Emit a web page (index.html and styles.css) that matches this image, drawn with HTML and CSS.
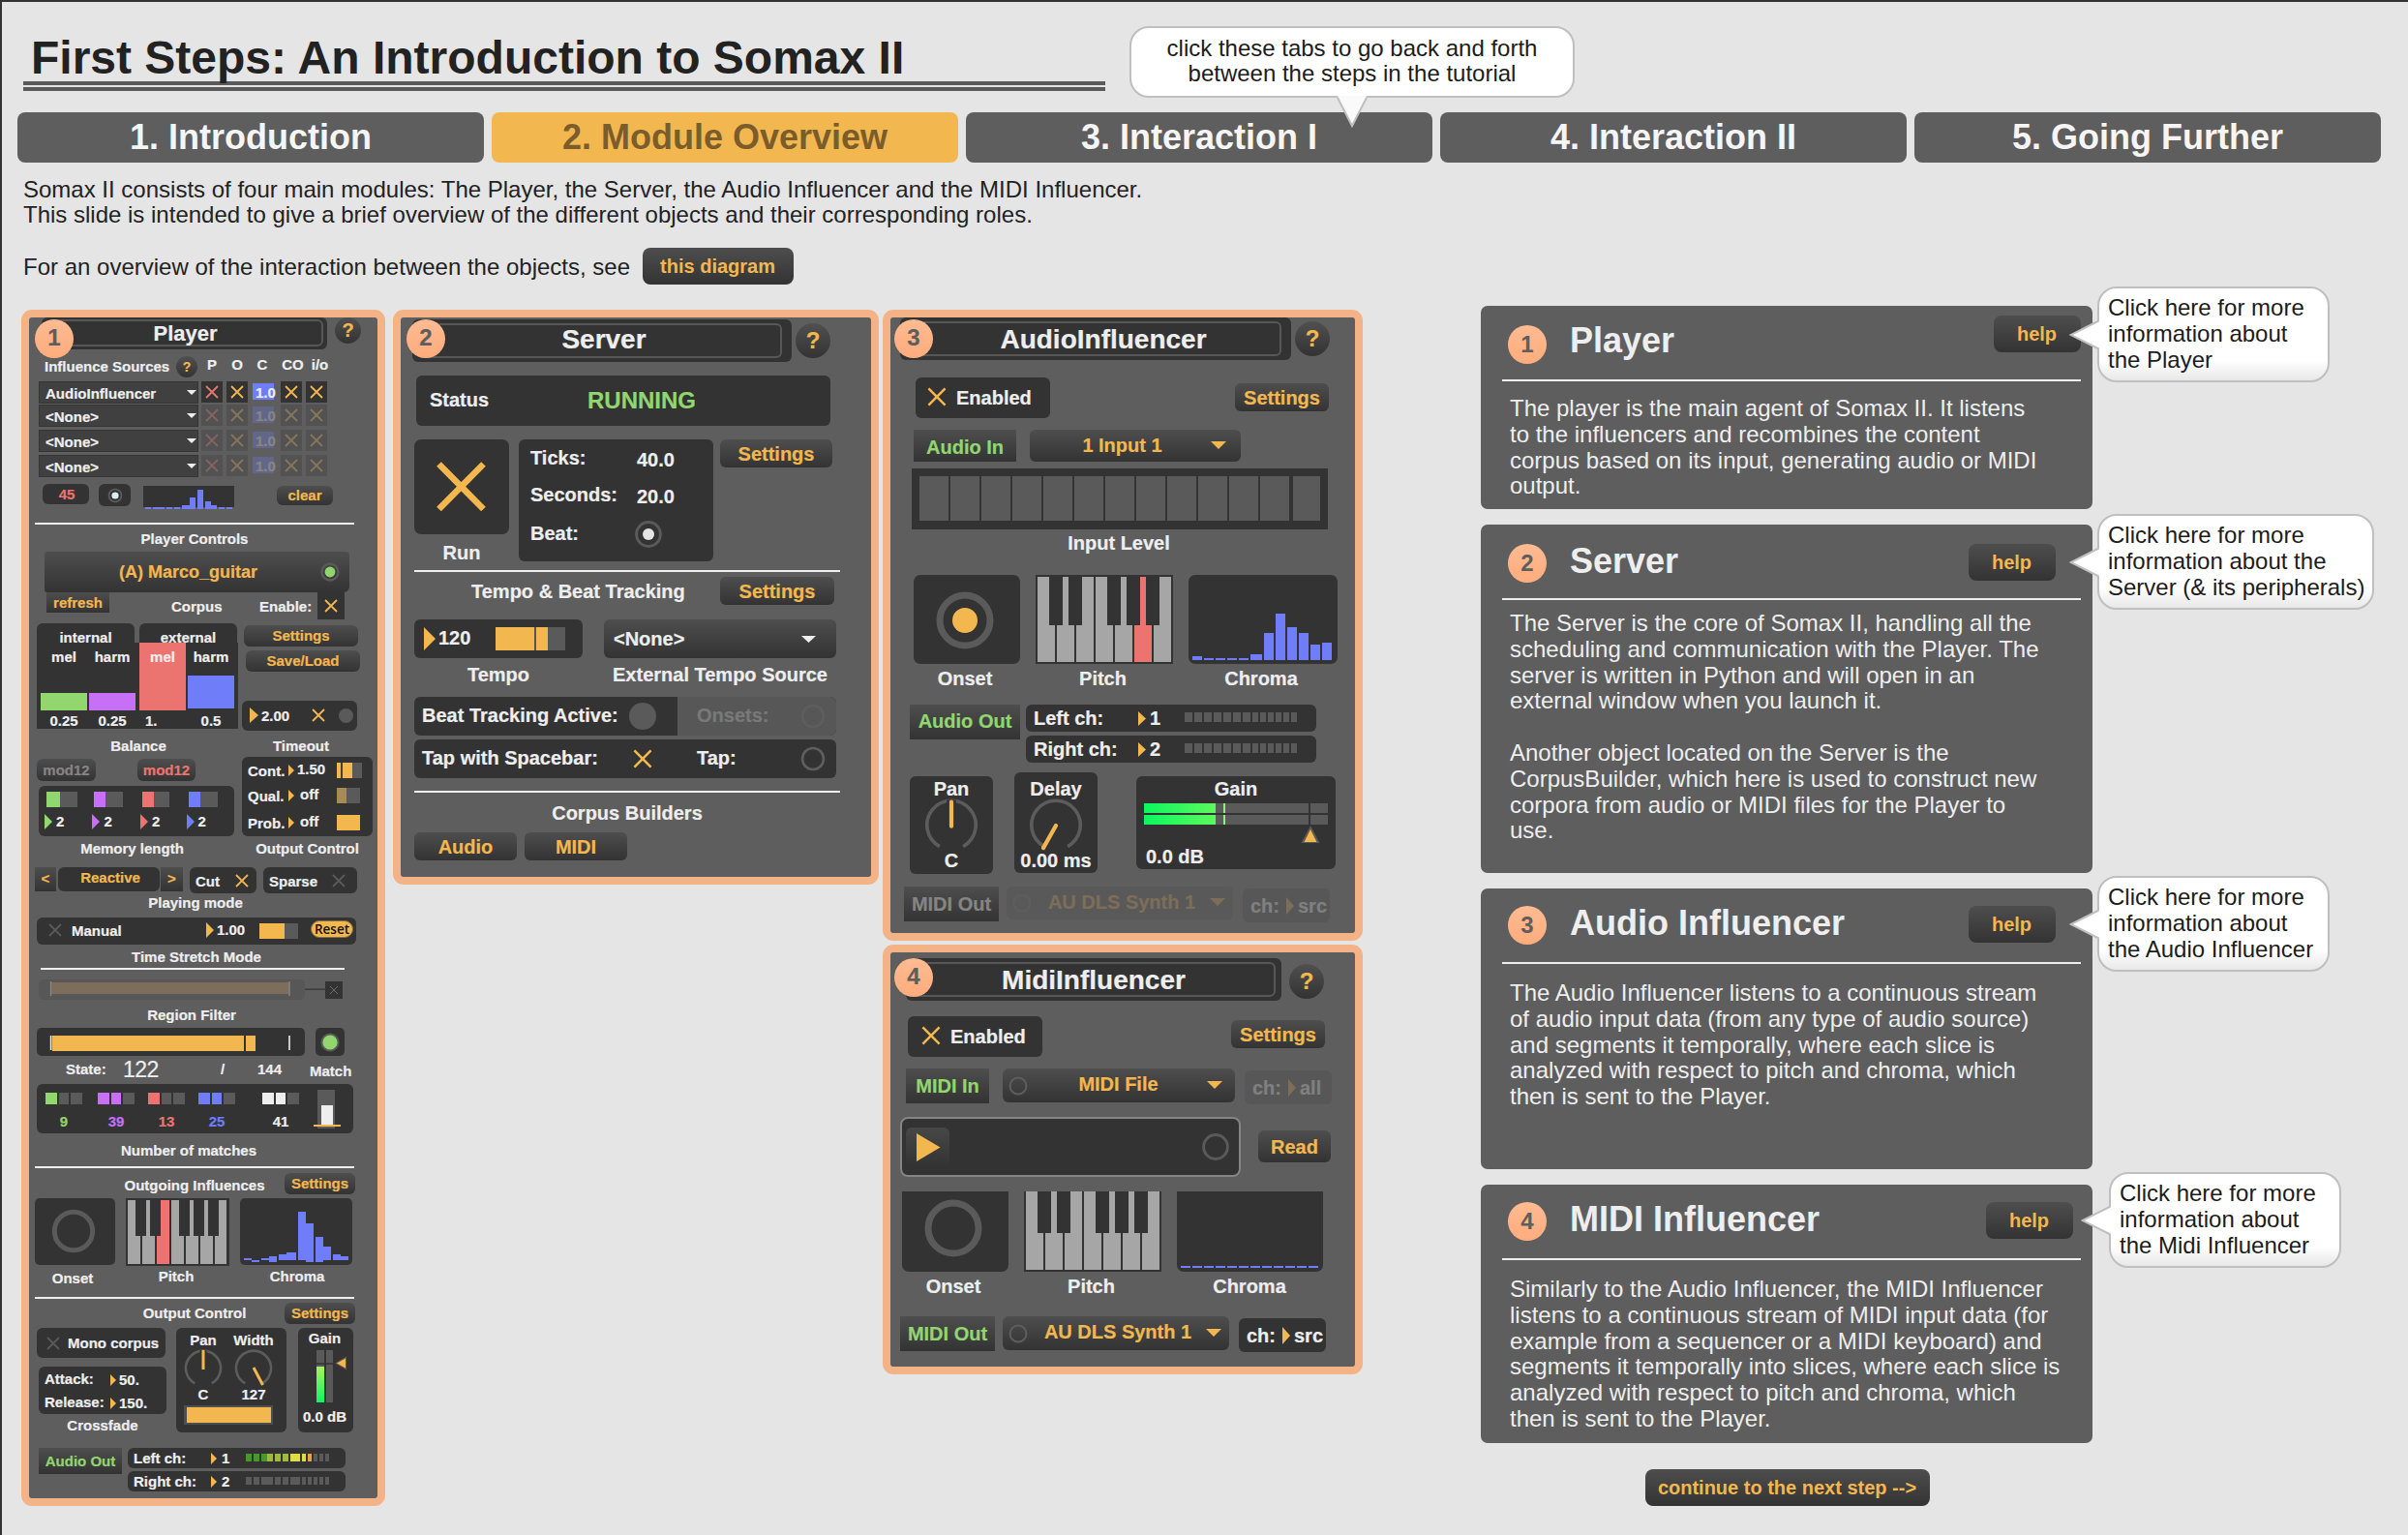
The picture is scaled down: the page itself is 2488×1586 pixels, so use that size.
FILE: index.html
```html
<!DOCTYPE html>
<html lang="en">
<head>
<meta charset="utf-8">
<title>First Steps: An Introduction to Somax II</title>
<link rel="stylesheet" href="styles.css">
</head>
<body>
<svg class="defs" width="0" height="0">
  <symbol id="x" viewBox="0 0 14 14"><path d="M1 1L13 13M13 1L1 13" stroke="currentColor" stroke-width="1.8" fill="none"/></symbol>
  <symbol id="tri" viewBox="0 0 6 12" preserveAspectRatio="none"><path d="M0 0L6 6L0 12Z" fill="currentColor"/></symbol>
  <symbol id="down" viewBox="0 0 16 8" preserveAspectRatio="none"><path d="M0 0H16L8 8Z" fill="currentColor"/></symbol>
  <symbol id="ring" viewBox="0 0 18 18"><circle cx="9" cy="9" r="7.6" fill="none" stroke="#5e5e5e" stroke-width="1.8"/></symbol>
  <symbol id="knob" viewBox="0 0 40 40"><path d="M11.3 35.4A18 18 0 1 1 28.7 35.4" fill="none" stroke="#5c5c5c" stroke-width="2.6"/></symbol>
  <symbol id="tail" viewBox="0 0 32 32"><path d="M32 1L1.5 16L32 31Z" fill="#fff"/><path d="M30.5 1.5L1.5 16L30.5 30.5" fill="none" stroke="#bfbfbf" stroke-width="2"/></symbol>
  <symbol id="leds" viewBox="0 0 116 10"><path fill="#5a5a5a" d="M0 0h8v10h-8zM10 0h8v10h-8zM20 0h8v10h-8zM30 0h8v10h-8zM40 0h8v10h-8zM50 0h8v10h-8zM60 0h8v10h-8zM70 0h6v10h-6zM78 0h6v10h-6zM86 0h6v10h-6zM94 0h6v10h-6zM102 0h6v10h-6zM110 0h6v10h-6z"/></symbol>
</svg>

<div class="page">
  <header class="head">
    <h1>First Steps: An Introduction to Somax II</h1>
    <div class="rule2"></div>
    <div class="callout callout-top">click these tabs to go back and forth<br>between the steps in the tutorial
      <svg class="tail-down" width="34" height="34" viewBox="0 0 34 34"><path d="M2 0L17 32L32 0Z" fill="#fafafa"/><path d="M2 2L17 31L32 2" fill="none" stroke="#bfbfbf" stroke-width="2"/></svg>
    </div>
  </header>

  <nav class="tabs">
    <a class="tab">1. Introduction</a>
    <a class="tab active">2. Module Overview</a>
    <a class="tab">3. Interaction I</a>
    <a class="tab">4. Interaction II</a>
    <a class="tab">5. Going Further</a>
  </nav>

  <section class="intro">
    <p>Somax II consists of four main modules: The Player, the Server, the Audio Influencer and the MIDI Influencer.<br>This slide is intended to give a brief overview of the different objects and their corresponding roles.</p>
    <div class="see"><span>For an overview of the interaction between the objects, see</span><button class="btn big diagram">this diagram</button></div>
  </section>

  <main class="work">
    <!-- Player -->
    <section class="panel player">
      <span class="badge b1">1</span>
      <div class="row p-head">
        <div class="titlebar"><div class="outline">Player</div></div>
        <span class="q">?</span>
      </div>
      <div class="row p-src">
        <span class="t src-label">Influence Sources</span><span class="q small">?</span>
        <span class="t c1">P</span><span class="t c2">O</span><span class="t c3">C</span><span class="t c4">CO</span><span class="t c5">i/o</span>
      </div>
      <div class="row src s1"><div class="dd">AudioInfluencer<svg><use href="#down"/></svg></div><i class="cell red"><svg><use href="#x"/></svg></i><i class="cell"><svg><use href="#x"/></svg></i><i class="num">1.0</i><i class="cell"><svg><use href="#x"/></svg></i><i class="cell"><svg><use href="#x"/></svg></i></div>
      <div class="row src off"><div class="dd">&lt;None&gt;<svg><use href="#down"/></svg></div><i class="cell red"><svg><use href="#x"/></svg></i><i class="cell"><svg><use href="#x"/></svg></i><i class="num">1.0</i><i class="cell"><svg><use href="#x"/></svg></i><i class="cell"><svg><use href="#x"/></svg></i></div>
      <div class="row src off"><div class="dd">&lt;None&gt;<svg><use href="#down"/></svg></div><i class="cell red"><svg><use href="#x"/></svg></i><i class="cell"><svg><use href="#x"/></svg></i><i class="num">1.0</i><i class="cell"><svg><use href="#x"/></svg></i><i class="cell"><svg><use href="#x"/></svg></i></div>
      <div class="row src off last"><div class="dd">&lt;None&gt;<svg><use href="#down"/></svg></div><i class="cell red"><svg><use href="#x"/></svg></i><i class="cell"><svg><use href="#x"/></svg></i><i class="num">1.0</i><i class="cell"><svg><use href="#x"/></svg></i><i class="cell"><svg><use href="#x"/></svg></i></div>
      <div class="row p-mon">
        <div class="box m45">45</div>
        <div class="box mled"><svg width="16" height="16"><circle cx="8" cy="8" r="6.5" fill="none" stroke="#5e5e5e" stroke-width="1.6"/><circle cx="8" cy="8" r="3.6" fill="#dbeef5"/></svg></div>
        <svg class="hist" width="94" height="24"><rect width="94" height="22" fill="#333"/><path fill="#6f7ef8" d="M2 22h6v2h-6zM10 22h12v2h-12zM24 22h6v2h-6zM32 22h6v2h-6zM40 20h8v4h-8zM48 12h6v12h-6zM56 4h6v20h-6zM64 16h6v8h-6zM70 20h6v4h-6zM78 22h6v2h-6zM86 22h6v2h-6z"/></svg>
        <button class="btn clear">clear</button>
      </div>
      <hr>
      <div class="t title pc">Player Controls</div>
      <button class="btn corpus">(A) Marco_guitar<svg width="20" height="20"><circle cx="10" cy="10" r="8.5" fill="none" stroke="#5a5a5a" stroke-width="2.4"/><circle cx="10" cy="10" r="5.4" fill="#91d66f"/></svg></button>
      <div class="row p-ref"><button class="btn sq refresh">refresh</button><span class="t corp">Corpus</span><span class="t enab">Enable:</span><i class="cell"><svg><use href="#x"/></svg></i></div>

      <div class="row p-mid">
        <div class="col bal">
          <div class="row heads"><span>internal</span><span>external</span></div>
          <div class="faders">
            <div class="fcol"><div class="fader f1">mel</div><b>0.25</b></div>
            <div class="fcol"><div class="fader f2">harm</div><b>0.25</b></div>
            <div class="fcol f-gap"><div class="fader f3">mel</div><b class="one">1.</b></div>
            <div class="fcol"><div class="fader f4">harm</div><b>0.5</b></div>
          </div>
          <div class="t ctr bal-l">Balance</div>
          <div class="row mods"><button class="btn mod gray">mod12</button><button class="btn mod redt">mod12</button></div>
          <div class="mem">
            <div class="mcell green"><svg width="32" height="16"><rect width="32" height="16" fill="#5a5a5a"/><rect width="14" height="16" fill="currentColor"/></svg><div class="row"><svg class="tri"><use href="#tri"/></svg><b>2</b></div></div>
            <div class="mcell purple"><svg width="30" height="16"><rect width="30" height="16" fill="#5a5a5a"/><rect width="12" height="16" fill="currentColor"/></svg><div class="row"><svg class="tri"><use href="#tri"/></svg><b>2</b></div></div>
            <div class="mcell redc"><svg width="28" height="16"><rect width="28" height="16" fill="#5a5a5a"/><rect width="12" height="16" fill="currentColor"/></svg><div class="row"><svg class="tri"><use href="#tri"/></svg><b>2</b></div></div>
            <div class="mcell blue"><svg width="30" height="16"><rect width="30" height="16" fill="#5a5a5a"/><rect width="12" height="16" fill="currentColor"/></svg><div class="row"><svg class="tri"><use href="#tri"/></svg><b>2</b></div></div>
          </div>
          <div class="t mem-l">Memory length</div>
        </div>
        <div class="col outc">
          <button class="btn set1">Settings</button>
          <button class="btn set2">Save/Load</button>
          <div class="box timeout"><svg class="tri"><use href="#tri"/></svg><b>2.00</b><svg class="xi"><use href="#x"/></svg><i class="dot"></i></div>
          <div class="t time-l">Timeout</div>
          <div class="box ocbox">
            <div class="row oc1"><span class="t">Cont.</span><svg class="tri"><use href="#tri"/></svg><b>1.50</b><svg width="26" height="16"><rect width="26" height="16" fill="#5a5a5a"/><rect width="16" height="16" fill="#f3b74f"/><rect x="4" width="2" height="16" fill="#4a4033"/></svg></div>
            <div class="row oc2"><span class="t">Qual.</span><svg class="tri"><use href="#tri"/></svg><b class="o">off</b><svg width="26" height="16"><rect width="24" height="16" fill="#5a5a5a"/><rect width="10" height="16" fill="#a88a55"/></svg></div>
            <div class="row oc3"><span class="t">Prob.</span><svg class="tri"><use href="#tri"/></svg><b class="o">off</b><svg width="26" height="16"><rect width="24" height="16" fill="#f3b74f"/></svg></div>
          </div>
          <div class="t ctr oc-l">Output Control</div>
        </div>
      </div>

      <div class="row p-mode"><button class="btn sq lt">&lt;</button><div class="box reactive">Reactive</div><button class="btn sq gt">&gt;</button><div class="box cut">Cut<svg class="xi amber"><use href="#x"/></svg></div><div class="box sparse">Sparse<svg class="xi"><use href="#x"/></svg></div></div>
      <div class="t title pm">Playing mode</div>
      <div class="box manual"><svg class="xi"><use href="#x"/></svg><span class="t">Manual</span><svg class="tri"><use href="#tri"/></svg><b>1.00</b><svg class="bar" width="40" height="16"><rect width="40" height="16" fill="#5a5a5a"/><rect width="26" height="16" fill="#f3b74f"/></svg><span class="reset">Reset</span></div>
      <div class="t title ts">Time Stretch Mode</div>
      <hr class="short">
      <svg class="region" width="316" height="22"><rect width="275" height="21" rx="5" fill="#575757"/><rect x="13" y="3" width="246" height="12" fill="#7c6e5a"/><path d="M12.5 2v15M259 2v15" stroke="#858585" stroke-width="1.4"/><path d="M275 10.2h22" stroke="#333" stroke-width="1.2"/><rect x="296" y="2" width="18" height="18" fill="#333"/><path d="M301 7l8 8M309 7l-8 8" stroke="#6a6a6a" stroke-width="1"/></svg>
      <div class="t title rf">Region Filter</div>
      <div class="row p-state">
        <svg width="277" height="29"><rect width="277" height="29" rx="5" fill="#333"/><rect x="16" y="8" width="210" height="16" fill="#f3b74f"/><rect x="214" y="8" width="2" height="16" fill="#333"/><path d="M14.6 8v15M261 8v15" stroke="#eee" stroke-width="1.6"/></svg>
        <svg class="match-led" width="30" height="29"><rect width="30" height="29" rx="5" fill="#333"/><circle cx="15" cy="15" r="8.6" fill="#91d66f" stroke="#5a5a5a" stroke-width="2"/></svg>
      </div>
      <div class="row p-num"><span class="t st">State:</span><span class="n122">122</span><span class="t sl">/</span><span class="t n144">144</span><span class="t mt">Match</span></div>
      <div class="box matches">
        <div class="grp green"><svg width="38" height="12"><path fill="currentColor" d="M0 0h12v12h-12z"/><path fill="#5a5a5a" d="M14 0h10v12h-10zM26 0h12v12h-12z"/></svg>9</div>
        <div class="grp purple"><svg width="38" height="12"><path fill="currentColor" d="M0 0h12v12h-12zM14 0h10v12h-10z"/><path fill="#5a5a5a" d="M26 0h12v12h-12z"/></svg>39</div>
        <div class="grp redc"><svg width="38" height="12"><path fill="currentColor" d="M0 0h12v12h-12z"/><path fill="#5a5a5a" d="M14 0h10v12h-10zM26 0h12v12h-12z"/></svg>13</div>
        <div class="grp blue"><svg width="38" height="12"><path fill="currentColor" d="M0 0h12v12h-12zM14 0h10v12h-10z"/><path fill="#5a5a5a" d="M26 0h12v12h-12z"/></svg>25</div>
        <div class="grp whitec"><svg width="38" height="12"><path fill="currentColor" d="M0 0h12v12h-12zM14 0h10v12h-10z"/><path fill="#5a5a5a" d="M26 0h12v12h-12z"/></svg>41</div>
        <svg class="vs" width="28" height="40"><rect x="4" width="18" height="40" fill="#5a5a5a"/><rect x="8" y="16" width="12" height="20" fill="#eee"/><rect y="36" width="28" height="2" fill="#f3b74f"/></svg>
      </div>
      <div class="t title nm">Number of matches</div>
      <hr class="hr2">
      <div class="row p-oi"><span class="t ctr">Outgoing Influences</span><button class="btn">Settings</button></div>
      <div class="row p-viz">
        <svg width="83" height="69"><rect width="83" height="69" rx="5" fill="#333"/><circle cx="40" cy="34" r="19.7" fill="none" stroke="#5a5a5a" stroke-width="5"/></svg>
        <svg width="107" height="70"><rect width="107" height="70" fill="#333"/><path fill="#a6a6a6" d="M2 2h13v66h-13zM17 2h13v66h-13zM47 2h13v66h-13zM62 2h13v66h-13zM77 2h13v66h-13zM92 2h12v66h-12z"/><rect x="32" y="2" width="13" height="66" fill="#ec7470"/><path fill="#333" d="M10 0h11v39h-11zM25 0h11v39h-11zM55 0h11v39h-11zM70 0h11v39h-11zM85 0h11v39h-11z"/></svg>
        <svg width="116" height="69"><rect width="116" height="69" rx="5" fill="#333"/><path fill="#6f7ef8" d="M4 62h8v2h-8zM12 64h8v2h-8zM22 62h8v2h-8zM30 60h8v6h-8zM40 58h8v6h-8zM48 56h10v8h-10zM60 14h8v50h-8zM68 26h8v40h-8zM78 40h8v26h-8zM86 50h8v14h-8zM96 58h8v6h-8zM104 60h8v4h-8z"/></svg>
      </div>
      <div class="row p-vl"><span class="t ctr on">Onset</span><span class="t ctr pi">Pitch</span><span class="t ctr ch">Chroma</span></div>
      <hr>
      <div class="row p-oc"><span class="t ctr">Output Control</span><button class="btn">Settings</button></div>
      <div class="row p-out">
        <div class="col oa">
          <div class="box mono"><svg class="xi"><use href="#x"/></svg>Mono corpus</div>
          <div class="box atk"><div class="row"><span class="t">Attack:</span><svg class="tri"><use href="#tri"/></svg><b>50.</b></div><div class="row"><span class="t">Release:</span><svg class="tri"><use href="#tri"/></svg><b>150.</b></div></div>
          <div class="t ctr xf">Crossfade</div>
        </div>
        <div class="box pw">
          <div class="row"><div class="kn"><span>Pan</span><svg width="40" height="40"><use href="#knob"/><path d="M20 1V21" stroke="#333" stroke-width="7"/><path d="M20 1V21" stroke="#f3b74f" stroke-width="3"/></svg><span>C</span></div><div class="kn"><span>Width</span><svg width="40" height="40"><use href="#knob"/><path d="M20 19L29.5 37" stroke="#f3b74f" stroke-width="3"/></svg><span>127</span></div></div>
          <svg class="wbar" width="92" height="20"><rect width="92" height="20" fill="#4e4e4e"/><rect x="3" y="2" width="87" height="16" fill="#f3b74f"/></svg>
        </div>
        <div class="box pgain"><span>Gain</span><svg width="40" height="54"><defs><linearGradient id="gv" x1="0" y1="0" x2="0" y2="1"><stop offset="0" stop-color="#a8f25c"/><stop offset="1" stop-color="#0cf760"/></linearGradient></defs><path d="M10 0h8v54h-8zM20 0h7v54h-7z" fill="#5a5a5a"/><rect x="10" y="17" width="8" height="37" fill="url(#gv)"/><path d="M10 14h17" stroke="#333" stroke-width="1.5"/><path d="M29 13.5L41 6.5V20.5Z" fill="#5a5a5a"/><path d="M31 13.5L40 8.5V18.5Z" fill="#f3b74f"/></svg><span>0.0 dB</span></div>
      </div>
      <div class="row p-ao">
        <button class="btn sq greent ao">Audio Out</button>
        <div class="col">
          <div class="box chn"><span class="t">Left ch:</span><svg class="tri"><use href="#tri"/></svg><b>1</b><svg width="86" height="8"><path fill="#44992a" d="M0 0h6v8h-6zM8 0h6v8h-6zM16 0h6v8h-6z"/><path fill="#a0bb3c" d="M22 0h6v8h-6zM30 0h6v8h-6zM38 0h6v8h-6z"/><path fill="#dddd44" d="M46 0h10v8h-10zM58 0h4v8h-4z"/><path fill="#f0a03c" d="M64 0h4v8h-4z"/><path fill="#5a5a5a" d="M70 0h4v8h-4zM76 0h4v8h-4zM82 0h4v8h-4z"/></svg></div>
          <div class="box chn"><span class="t">Right ch:</span><svg class="tri"><use href="#tri"/></svg><b>2</b><svg width="86" height="8"><path fill="#5a5a5a" d="M0 0h6v8h-6zM8 0h6v8h-6zM16 0h12v8h-12zM30 0h6v8h-6zM38 0h6v8h-6zM46 0h10v8h-10zM58 0h4v8h-4zM64 0h4v8h-4zM70 0h4v8h-4zM76 0h4v8h-4zM82 0h4v8h-4z"/></svg></div>
        </div>
      </div>
    </section>

    <!-- Server -->
    <section class="panel large server">
      <span class="badge">2</span>
      <div class="row s-head"><div class="titlebar"><div class="outline">Server</div></div><span class="q">?</span></div>
      <div class="box status"><span>Status</span><span class="running">RUNNING</span></div>
      <div class="row s-run">
        <div class="col"><svg width="98" height="98"><rect width="98" height="98" rx="7" fill="#333"/><path d="M25.5 25.5L71.5 72M71.5 25.5L25.5 72" stroke="#f3b74f" stroke-width="6.6"/></svg><span class="t ctr run">Run</span></div>
        <div class="box ticks"><div class="row"><span>Ticks:</span><b>40.0</b></div><div class="row"><span>Seconds:</span><b>20.0</b></div><div class="row"><span>Beat:</span><svg width="28" height="28"><circle cx="14" cy="14" r="12.4" fill="none" stroke="#5a5a5a" stroke-width="3"/><circle cx="14" cy="14" r="6" fill="#e5e5e5"/></svg></div></div>
        <button class="btn">Settings</button>
      </div>
      <hr>
      <div class="row s-tb"><span class="t ctr">Tempo &amp; Beat Tracking</span><button class="btn">Settings</button></div>
      <div class="row s-tempo">
        <div class="box tempo"><svg class="tri"><use href="#tri"/></svg><b>120</b><svg width="72" height="24"><rect width="72" height="24" fill="#5a5a5a"/><rect width="54" height="24" fill="#f3b74f"/><rect x="40" width="2" height="24" fill="#555"/></svg></div>
        <div class="btn none">&lt;None&gt;<svg><use href="#down"/></svg></div>
      </div>
      <div class="row s-tl"><span class="t ctr">Tempo</span><span class="t ctr">External Tempo Source</span></div>
      <div class="box beat"><div class="row bt-on"><span>Beat Tracking Active:</span><i class="dot"></i></div><div class="row bt-off"><span>Onsets:</span><svg width="26" height="26"><use href="#ring"/></svg></div></div>
      <div class="box tap"><div class="row bt-on"><span>Tap with Spacebar:</span><svg class="xi"><use href="#x"/></svg></div><div class="row bt-off"><span>Tap:</span><svg width="26" height="26"><use href="#ring"/></svg></div></div>
      <hr class="hr3">
      <div class="t ctr cb">Corpus Builders</div>
      <div class="row s-cb"><button class="btn">Audio</button><button class="btn">MIDI</button></div>
    </section>

    <div class="col infl">
      <!-- Audio influencer -->
      <section class="panel large audio">
        <span class="badge">3</span>
        <div class="row a-head"><div class="titlebar"><div class="outline">AudioInfluencer</div></div><span class="q">?</span></div>
        <div class="row a-en"><div class="box enabled"><svg class="xi"><use href="#x"/></svg>Enabled</div><button class="btn">Settings</button></div>
        <div class="row a-in"><button class="btn sq greent">Audio In</button><div class="btn sel"><span>1 Input 1</span><svg class="dn"><use href="#down"/></svg></div></div>
        <svg class="level" width="430" height="63"><rect width="430" height="63" fill="#333"/><path fill="#5a5a5a" d="M8 8h30v46h-30zM40 8h30v46h-30zM72 8h30v46h-30zM104 8h30v46h-30zM136 8h30v46h-30zM168 8h30v46h-30zM200 8h30v46h-30zM232 8h30v46h-30zM264 8h30v46h-30zM296 8h30v46h-30zM328 8h30v46h-30zM360 8h30v46h-30zM394 8h28v46h-28z"/></svg>
        <div class="t ctr il">Input Level</div>
        <div class="row viz a-viz">
          <svg width="110" height="92"><rect width="110" height="92" rx="7" fill="#333"/><circle cx="53" cy="47" r="26" fill="none" stroke="#5a5a5a" stroke-width="7"/><circle cx="53" cy="47" r="13" fill="#f3b74f"/></svg>
          <svg width="142" height="92"><rect width="142" height="92" fill="#333"/><path fill="#a6a6a6" d="M2 2h18v88h-18zM22 2h18v88h-18zM42 2h18v88h-18zM62 2h18v88h-18zM82 2h18v88h-18zM122 2h18v88h-18z"/><rect x="102" y="2" width="18" height="88" fill="#ec7470"/><path fill="#333" d="M14 0h14v52h-14zM34 0h14v52h-14zM74 0h14v52h-14zM94 0h14v52h-14zM114 0h14v52h-14z"/></svg>
          <svg width="154" height="92"><rect width="154" height="92" rx="7" fill="#333"/><path fill="#6f7ef8" d="M4 84h10v4h-10zM16 86h10v2h-10zM28 86h10v2h-10zM40 86h10v2h-10zM52 86h10v2h-10zM64 82h12v6h-12zM78 60h10v28h-10zM90 40h10v48h-10zM102 54h10v34h-10zM114 60h10v28h-10zM126 72h10v16h-10zM138 70h10v18h-10z"/></svg>
        </div>
        <div class="row vl a-vl"><span class="t ctr">Onset</span><span class="t ctr">Pitch</span><span class="t ctr">Chroma</span></div>
        <div class="row a-out">
          <button class="btn sq greent">Audio Out</button>
          <div class="col">
            <div class="box chn"><span>Left ch:</span><svg class="tri"><use href="#tri"/></svg><b>1</b><svg width="116" height="10"><use href="#leds"/></svg></div>
            <div class="box chn"><span>Right ch:</span><svg class="tri"><use href="#tri"/></svg><b>2</b><svg width="116" height="10"><use href="#leds"/></svg></div>
          </div>
        </div>
        <div class="row a-pan">
          <div class="box kbox k1"><span>Pan</span><svg width="56" height="56" viewBox="0 0 40 40"><use href="#knob"/><path d="M20 1V22" stroke="#333" stroke-width="7"/><path d="M20 2.5V20.5" stroke="#f3b74f" stroke-width="3" stroke-linecap="round"/></svg><span>C</span></div>
          <div class="box kbox k2"><span>Delay</span><svg width="56" height="56" viewBox="0 0 40 40"><use href="#knob"/><path d="M20 20L10.7 36.5" stroke="#f3b74f" stroke-width="3" stroke-linecap="round"/></svg><span>0.00 ms</span></div>
          <div class="box gain"><span class="ctr">Gain</span><svg width="190" height="42"><defs><linearGradient id="gh"><stop offset="0" stop-color="#0cf760"/><stop offset="1" stop-color="#5cf85c"/></linearGradient></defs><path fill="#5a5a5a" d="M0 0h190v10h-190zM0 12h190v10h-190z"/><path d="M0 0h74v10h-74zM0 12h74v10h-74z" fill="url(#gh)"/><path fill="#8ef07a" d="M82 0h2v10h-2zM82 12h2v10h-2z"/><path fill="#333" d="M170 0h2v22h-2z"/><path d="M172 23L181.5 41H162.5Z" fill="#5a5a5a"/><path d="M172 27L178.5 40H165.5Z" fill="#f3b74f"/></svg><span>0.0 dB</span></div>
        </div>
        <div class="row a-mo"><button class="btn sq gray">MIDI Out</button><div class="btn sel dim"><svg class="rg"><use href="#ring"/></svg><span>AU DLS Synth 1</span><svg class="dn"><use href="#down"/></svg></div><div class="box chs dim"><span>ch:</span><svg class="tri"><use href="#tri"/></svg><span>src</span></div></div>
      </section>

      <!-- MIDI influencer -->
      <section class="panel large midi">
        <span class="badge">4</span>
        <div class="row m-head"><div class="titlebar"><div class="outline">MidiInfluencer</div></div><span class="q">?</span></div>
        <div class="row m-en"><div class="box enabled"><svg class="xi"><use href="#x"/></svg>Enabled</div><button class="btn">Settings</button></div>
        <div class="row m-in"><button class="btn sq greent">MIDI In</button><div class="btn sel"><svg class="rg"><use href="#ring"/></svg><span>MIDI File</span><svg class="dn"><use href="#down"/></svg></div><div class="box chs dim"><span>ch:</span><svg class="tri"><use href="#tri"/></svg><span>all</span></div></div>
        <div class="row m-play"><div class="play"><div class="pbtn"><svg width="25" height="29"><path d="M0 0L24.5 14.5L0 29Z" fill="#f3b74f"/></svg></div><svg width="28" height="28"><circle cx="14" cy="14" r="12.4" fill="none" stroke="#5a5a5a" stroke-width="3"/></svg></div><button class="btn read">Read</button></div>
        <div class="row viz m-viz">
          <svg width="110" height="83"><path d="M0 0H110V76a7 7 0 0 1-7 7H7a7 7 0 0 1-7-7Z" fill="#333"/><circle cx="53" cy="38" r="26" fill="none" stroke="#5a5a5a" stroke-width="7"/></svg>
          <svg width="142" height="83"><rect width="142" height="83" fill="#333"/><path fill="#a6a6a6" d="M2 0h18v81h-18zM22 0h18v81h-18zM42 0h18v81h-18zM62 0h18v81h-18zM82 0h18v81h-18zM102 0h18v81h-18zM122 0h18v81h-18z"/><path fill="#333" d="M14 0h14v43h-14zM34 0h14v43h-14zM74 0h14v43h-14zM94 0h14v43h-14zM114 0h14v43h-14z"/></svg>
          <svg width="152" height="83"><path d="M0 0H151V76a7 7 0 0 1-7 7H7a7 7 0 0 1-7-7Z" fill="#333"/><path fill="#6f7ef8" d="M4 77h10v2h-10zM16 77h10v2h-10zM28 77h10v2h-10zM40 77h10v2h-10zM52 77h10v2h-10zM64 77h10v2h-10zM76 77h10v2h-10zM88 77h10v2h-10zM100 77h10v2h-10zM112 77h10v2h-10zM124 77h10v2h-10zM136 77h10v2h-10z"/></svg>
        </div>
        <div class="row vl m-vl"><span class="t ctr">Onset</span><span class="t ctr">Pitch</span><span class="t ctr">Chroma</span></div>
        <div class="row m-out"><button class="btn sq greent">MIDI Out</button><div class="btn sel"><svg class="rg"><use href="#ring"/></svg><span>AU DLS Synth 1</span><svg class="dn"><use href="#down"/></svg></div><div class="box chs"><span>ch:</span><svg class="tri"><use href="#tri"/></svg><span>src</span></div></div>
      </section>
    </div>

    <div class="cards">
      <article class="card k-player">
        <header><span class="num">1</span><h2>Player</h2><button class="btn big">help</button></header>
        <p>The player is the main agent of Somax II. It listens<br>to the influencers and recombines the content<br>corpus based on its input, generating audio or MIDI<br>output.</p>
        <div class="callout side">Click here for more<br>information about<br>the Player<svg class="tail"><use href="#tail"/></svg></div>
      </article>
      <article class="card k-server">
        <header><span class="num">2</span><h2>Server</h2><button class="btn big">help</button></header>
        <p>The Server is the core of Somax II, handling all the<br>scheduling and communication with the Player. The<br>server is written in Python and will open in an<br>external window when you launch it.<br><br>Another object located on the Server is the<br>CorpusBuilder, which here is used to construct new<br>corpora from audio or MIDI files for the Player to<br>use.</p>
        <div class="callout side wide">Click here for more<br>information about the<br>Server (&amp; its peripherals)<svg class="tail"><use href="#tail"/></svg></div>
      </article>
      <article class="card k-audio">
        <header><span class="num">3</span><h2>Audio Influencer</h2><button class="btn big">help</button></header>
        <p>The Audio Influencer listens to a continuous stream<br>of audio input data (from any type of audio source)<br>and segments it temporally, where each slice is<br>analyzed with respect to pitch and chroma, which<br>then is sent to the Player.</p>
        <div class="callout side">Click here for more<br>information about<br>the Audio Influencer<svg class="tail"><use href="#tail"/></svg></div>
      </article>
      <article class="card k-midi">
        <header><span class="num">4</span><h2>MIDI Influencer</h2><button class="btn big">help</button></header>
        <p>Similarly to the Audio Influencer, the MIDI Influencer<br>listens to a continuous stream of MIDI input data (for<br>example from a sequencer or a MIDI keyboard) and<br>segments it temporally into slices, where each slice is<br>analyzed with respect to pitch and chroma, which<br>then is sent to the Player.</p>
        <div class="callout side">Click here for more<br>information about<br>the Midi Influencer<svg class="tail"><use href="#tail"/></svg></div>
      </article>
      <button class="btn big next">continue to the next step --&gt;</button>
    </div>
  </main>
</div>
</body>
</html>
```

FILE: styles.css
```css
* { box-sizing: border-box; margin: 0; padding: 0; }
body { background: #e5e5e5; color: #222; font-family: "Liberation Sans", Arial, sans-serif; }
.defs { display: block; height: 0; }
svg { display: block; flex: none; }
i { font-style: normal; }
.page { width: 2488px; height: 1586px; overflow: hidden; box-shadow: inset 2px 2px #333; }
.row { display: flex; align-items: flex-start; }
.row > *, .box > * { flex: none; }
.col { display: flex; flex-direction: column; }
.ctr { text-align: center; }

/* header */
.head { position: relative; height: 116px; padding: 33px 0 0 24px; }
h1 { height: 51px; padding-left: 8px; font-size: 48px; line-height: 53px; white-space: nowrap; }
.rule2 { width: 1118px; height: 10px; border: solid #5a5a5a; border-width: 4px 0; }
.callout { position: absolute; border: 2px solid #bfbfbf; border-radius: 20px; background: linear-gradient(#fff 78%, #e8e8e8); color: #1c1c1c; font-size: 24px; line-height: 26.8px; white-space: nowrap; }
.callout-top { z-index: 2; left: 1167px; top: 27px; width: 460px; height: 74px; padding-top: 8px; background: #fff; line-height: 26px; text-align: center; }
.tail-down { position: absolute; left: 211px; top: 70px; }
.tabs { display: grid; grid-template-columns: repeat(5, 482px); gap: 8px; height: 52px; margin-left: 18px; }
.tab { border-radius: 8px; background: #5e5e5e; color: #f5f5f5; font-size: 36px; font-weight: bold; line-height: 52px; text-align: center; }
.tab.active { background: #f3b74f; color: #7b5d2c; }
.intro { height: 148px; padding: 15px 0 0 24px; font-size: 24px; line-height: 26px; }
.intro p { height: 73px; }
.see { display: flex; align-items: center; height: 38px; }
.see span { padding-top: 1px; }
.diagram { width: 156px; margin-left: 13px; }

/* shared controls */
.btn { display: flex; align-items: center; justify-content: center; border: 0; border-radius: 6px; background: linear-gradient(#4e4e4e, #333); color: #f3b74f; font-family: inherit; font-size: 15px; font-weight: bold; line-height: 18px; white-space: nowrap; flex: none; }
.btn.sq { border-radius: 0; }
.btn.big { height: 38px; padding-right: 1px; border-radius: 8px; font-size: 20px; line-height: 24px; }
.btn.greent { color: #91d66f; }
.btn.gray { color: #858585; }
.btn.redt { color: #ec7470; }
.green { color: #91d66f; }
.purple { color: #c76ff5; }
.redc { color: #ec7470; }
.blue { color: #6f7ef8; }
.whitec { color: #eee; }
.box { display: flex; border-radius: 6px; background: #333; }
.t { display: block; line-height: 18px; white-space: nowrap; }
.tri { color: #f3b74f; }
.xi { width: 14px; height: 14px; color: #5a5a5a; }
.dot { border-radius: 50%; background: #5a5a5a; }

.work { display: flex; align-items: flex-start; padding-left: 22px; }
.panel { position: relative; flex: none; margin-top: 4px; border: 8px solid #f3b386; border-radius: 11px; background: #5e5e5e; color: #eee; font-size: 15px; font-weight: bold; line-height: 18px; -webkit-text-stroke: .2px currentColor; }
.badge { position: absolute; z-index: 1; left: 6px; top: 2px; width: 40px; height: 40px; border-radius: 50%; background: linear-gradient(#ffbb92, #ffac7c); color: #5e5e5e; font-size: 24px; line-height: 38px; text-align: center; }
.titlebar { border-radius: 6px; background: #333; }
.outline { border: 2px solid #575757; border-radius: 6px; color: #eee; text-align: center; }
.q { border-radius: 50%; background: linear-gradient(#505050, #333); color: #f3b74f; text-align: center; }
.panel hr { width: 330px; height: 2px; margin-left: 6px; border: 0; background: #eee; }

/* player */
.player { width: 376px; height: 1236px; }
.p-head { height: 40px; }
.p-head .titlebar { width: 295px; height: 33px; margin-left: 13px; padding: 2px 4px; }
.p-head .outline { height: 28px; padding-left: 2px; font-size: 22px; line-height: 25px; }
.p-head .q { width: 27px; height: 27px; margin-left: 8px; font-size: 20px; line-height: 27px; }
.p-src { height: 26px; }
.src-label { width: 136px; margin: 2px 0 0 16px; }
.q.small { width: 22px; height: 22px; font-size: 14px; line-height: 22px; }
.p-src .t:not(.src-label) { text-align: center; }
.c1 { width: 22px; margin-left: 4px; }
.c2 { width: 22px; margin-left: 4px; }
.c3 { width: 22px; margin-left: 4px; }
.c4 { width: 27px; margin-left: 7px; }
.c5 { width: 27px; margin-left: 1px; }
.src { height: 26px; }
.src.s1 { height: 24px; }
.src.last { height: 30px; }
.src .dd { display: flex; align-items: center; justify-content: space-between; width: 165px; height: 22.5px; margin-left: 10px; padding: 3px 1px 0 6px; border: 1px solid #353535; background: #404040; }
.dd svg { width: 10px; height: 5px; margin-bottom: 2px; }
.cell { display: flex; align-items: center; justify-content: center; width: 22px; height: 22px; margin-left: 4px; background: #333; color: #f3b74f; }
.cell svg { width: 14px; height: 14px; }
.cell.red { margin-left: 3px; color: #ec7470; }
.src .num { width: 22px; height: 17px; margin: 2px 7px 0 5px; padding-left: 3px; background: #6f7ef8; line-height: 19px; }
.src .num + .cell { margin-left: 0; }
.off .cell, .off .num { opacity: .27; }
.p-mon { height: 40px; }
.m45 { width: 48px; height: 21px; margin-left: 14px; padding-left: 2px; align-items: center; justify-content: center; color: #ec7470; }
.mled { width: 33px; height: 23px; margin-left: 10px; align-items: center; justify-content: center; }
.hist { margin: 2px 0 0 13px; }
.clear { width: 58px; height: 20px; margin: 2px 0 0 44px; }
.title { width: 342px; text-align: center; }
.pc { margin: 6px 0 4px; }
.corpus { width: 315px; height: 42px; margin-left: 16px; padding-left: 77px; padding-right: 10px; justify-content: space-between; border-radius: 3px 4px 6px 3px; font-size: 18px; }
.p-ref { height: 32px; }
.refresh { width: 65px; height: 21px; margin-left: 18px; }
.corp { width: 91px; margin: 6px 0 0 64px; }
.enab { width: 60px; margin-top: 6px; }
.p-ref .cell { width: 28px; height: 28px; margin-left: 0; }
.p-mid { height: 252px; padding-left: 8px; }
.bal { width: 208px; }
.heads { gap: 5px; }
.heads span { width: 101px; height: 20px; padding-top: 6px; border-radius: 6px 6px 0 0; background: #333; line-height: 18px; text-align: center; }
.faders { display: flex; gap: 2px; height: 89px; padding-left: 4px; background: #333; }
.fcol { width: 48px; text-align: center; }
.fcol b { display: block; margin-top: 2px; }
.fcol .one { padding-left: 6px; text-align: left; }
.f-gap { margin-left: 2px; }
.fader { height: 70px; padding-top: 6px; background-repeat: no-repeat; }
.f1 { background-image: linear-gradient(#91d66f, #91d66f); background-size: 100% 18px; background-position: 0 52px; }
.f2 { background-image: linear-gradient(#c76ff5, #c76ff5); background-size: 100% 18px; background-position: 0 52px; }
.f3 { background-image: linear-gradient(#ec7470, #ec7470); }
.f4 { background-image: linear-gradient(#6f7ef8, #6f7ef8); background-size: 100% 34px; background-position: 0 34px; }
.bal-l { margin: 9px 0 4px; padding-left: 2px; }
.mods { height: 28px; }
.mod { width: 61px; height: 23px; }
.mod.redt { width: 60px; margin-left: 43px; }
.mem { display: flex; width: 202px; height: 52px; margin-left: 2px; padding: 6px 0 0 6px; border-radius: 6px; background: #333; }
.mcell { width: 52px; }
.mcell:nth-child(3) { width: 50px; }
.mcell > svg { margin-left: 2px; }
.mcell .row { margin-top: 6px; }
.mcell .tri { width: 8px; height: 16px; margin-top: 1px; color: inherit; }
.mcell b { margin-left: 4px; color: #eee; }
.mem-l { width: 197px; margin-top: 4px; text-align: center; }
.outc { width: 135px; margin-left: 4px; }
.set1, .set2 { width: 118px; height: 22px; }
.set1 { margin: 2px 0 4px 2px; }
.set2 { margin-left: 4px; }
.timeout { width: 119px; height: 31px; margin-top: 30px; padding-left: 8px; }
.timeout .tri { width: 9px; height: 16px; margin-top: 7px; }
.timeout b { width: 52px; margin: 7px 0 0 3px; }
.timeout .xi { margin-top: 8px; color: #f3b74f; }
.timeout .dot { width: 15px; height: 15px; margin: 8px 0 0 14px; }
.time-l { width: 122px; margin: 7px 0 2px; text-align: center; }
.ocbox { flex-direction: column; height: 82px; padding: 6px 0 0 6px; }
.oc1 { height: 26px; }
.oc2 { height: 28px; }
.ocbox .t { width: 42px; }
.ocbox .tri { width: 6px; height: 12px; margin-top: 2px; }
.ocbox b { width: 41px; margin: -2px 0 0 3px; }
.ocbox .o { padding-left: 3px; }
.oc-l { margin-top: 4px; }
.p-mode { height: 28px; }
.lt { width: 22px; height: 25px; margin-left: 6px; padding-bottom: 2px; }
.gt { width: 23px; height: 25px; margin-left: 1px; padding-bottom: 2px; }
.reactive { width: 105px; height: 25px; margin-left: 2px; padding: 0 0 3px 3px; align-items: center; justify-content: center; color: #f3b74f; }
.cut, .sparse { height: 27px; margin-left: 7px; padding: 2px 8px 0 6px; align-items: center; justify-content: space-between; }
.cut { width: 69px; }
.sparse { width: 97px; padding-right: 12px; }
.cut .xi, .sparse .xi { margin-bottom: 2px; }
.xi.amber { color: #f3b74f; }
.manual { width: 330px; height: 28px; margin: 6px 0 4px 8px; padding-left: 12px; }
.manual .xi { margin-top: 6px; }
.manual .t { width: 139px; margin: 5px 0 0 10px; }
.manual .tri { width: 8px; height: 16px; margin-top: 5px; }
.manual b { width: 44px; margin: 4px 0 0 3px; }
.manual .bar { margin-top: 6px; }
.reset { width: 44px; height: 18px; margin: 3px 0 0 13px; border: 1px solid #8a6d3a; border-radius: 9px; background: #f3b74f; color: #111; font: 600 13.5px/16px "Open Sans", sans-serif; text-align: center; -webkit-text-stroke: 0; }
.pm { padding-left: 2px; }
.ts { padding-left: 4px; }
.panel hr.short { width: 314px; margin: 2px 0 0 12px; }
.region { margin: 10px 0 0 10px; }
.rf { margin: 6px 0 4px; padding-right: 6px; }
.p-state { height: 29px; padding-left: 8px; }
.match-led { margin-left: 11px; }
.p-num { height: 29px; }
.st { width: 59px; margin: 5px 0 0 38px; }
.n122 { width: 89px; padding-top: 1px; font-size: 23px; font-weight: normal; line-height: 26px; letter-spacing: -.5px; }
.sl { width: 28px; margin-top: 5px; text-align: center; }
.n144 { width: 52px; margin: 5px 0 0 22px; }
.mt { margin: 7px 0 0 2px; }
.matches { width: 327px; height: 51px; margin-left: 8px; padding-left: 9px; }
.grp { width: 38px; padding-top: 9px; margin-right: 16px; text-align: center; }
.grp:nth-child(2), .grp:nth-child(3) { margin-right: 14px; }
.grp:nth-child(4) { margin-right: 28px; }
.grp:nth-child(5) { margin-right: 15px; }
.grp svg { margin-bottom: 9px; }
.vs { margin-top: 6px; }
.nm { margin: 9px 0 7px; padding-right: 12px; }
.p-oi { height: 22px; margin-top: 5px; }
.p-oi .t, .p-oc .t { width: 146px; margin: 4px 20px 0 98px; }
.p-oc .t { margin-top: 2px; }
.p-oi .btn, .p-oc .btn { width: 73px; height: 22px; }
.p-viz { height: 70px; margin-top: 4px; padding-left: 6px; gap: 11px; }
.p-vl { height: 32px; }
.on { width: 82px; margin: 4px 0 0 4px; }
.pi { width: 106px; margin: 2px 0 0 13px; }
.ch { width: 116px; margin: 2px 0 0 14px; }
.p-oc { height: 26px; margin-top: 4px; }
.p-out { height: 124px; padding-left: 8px; }
.oa { width: 144px; }
.mono { width: 133px; height: 31px; padding-left: 10px; align-items: center; }
.mono .xi { margin-right: 8px; color: #5a5a5a; }
.atk { flex-direction: column; width: 132px; height: 49px; margin: 9px 0 3px 2px; padding: 4px 0 0 6px; gap: 5px; }
.atk .t { width: 68px; }
.atk .tri { width: 6px; height: 12px; margin-top: 4px; }
.atk b { margin: 1px 0 0 3px; }
.xf { width: 136px; }
.pw { flex-direction: column; width: 114px; height: 108px; padding: 4px 0 0 2px; }
.kn { display: flex; flex-direction: column; align-items: center; width: 52px; }
.kn svg { margin: 0 0 -2px; }
.wbar { margin: 2px 0 0 6px; }
.pgain { flex-direction: column; align-items: center; width: 57px; height: 108px; margin-left: 12px; padding: 2px 2px 0 0; }
.pgain svg { margin: 3px 0 6px 2px; overflow: visible; }
.ao { width: 86px; height: 27px; margin: 0 6px 0 10px; }
.p-ao .col { gap: 3px; }
.p-ao .chn { width: 225px; height: 21px; padding-left: 6px; }
.p-ao .chn .t { width: 80px; margin-top: 2px; }
.p-ao .chn .tri { width: 6px; height: 12px; margin-top: 5px; }
.p-ao .chn b { width: 25px; margin: 2px 0 0 5px; }
.p-ao .chn b + svg { margin-top: 6px; }

/* panels drawn at the larger scale */
.large { font-size: 20px; line-height: 24px; }
.large .t { line-height: 24px; }
.large .btn { font-size: 20px; line-height: 24px; }
.large .titlebar { height: 44px; padding: 4px 10px 0 4px; }
.large .outline { height: 36px; font-size: 28px; line-height: 33px; }
.large .q { width: 36px; height: 36px; font-size: 24px; line-height: 36px; }
.large .xi { width: 20px; height: 20px; color: #f3b74f; }

.server { width: 502px; height: 594px; margin-left: 8px; }
.s-head { height: 60px; padding-top: 2px; }
.s-head .titlebar { width: 392px; margin-left: 12px; }
.s-head .outline { padding-left: 10px; line-height: 29px; }
.s-head .q { margin: 4px 0 0 4px; }
.status { align-items: center; width: 428px; height: 52px; margin-left: 16px; padding-left: 14px; }
.status span:first-child { width: 163px; padding-bottom: 2px; }
.running { color: #91d66f; font-size: 24px; }
.s-run { height: 135px; margin-top: 14px; padding-left: 14px; }
.run { margin-top: 7px; }
.ticks { flex-direction: column; width: 201px; height: 126px; margin: 0 7px 0 10px; padding: 7px 0 0 12px; gap: 12px; }
.ticks .row { height: 26px; }
.ticks .row:nth-child(3) { margin-top: 2px; }
.ticks span { width: 110px; }
.ticks b { margin-top: 2px; }
.ticks svg { margin: -1px 0 0 -2px; }
.s-run .btn { width: 116px; height: 29px; }
.panel.server hr { width: 440px; margin-left: 14px; }
.s-tb { height: 44px; padding-top: 5px; margin-bottom: 5px; }
.s-tb .t { width: 220px; margin: 3px 37px 0 73px; }
.s-tb .btn { width: 118px; height: 29px; }
.s-tempo { height: 40px; padding-left: 14px; margin-top: 0; gap: 22px; }
.tempo { width: 174px; height: 40px; padding: 8px 0 0 10px; }
.tempo .tri { width: 12px; height: 24px; }
.tempo b { width: 59px; margin: -1px 0 0 3px; }
.none { width: 240px; height: 40px; padding: 0 21px 0 10px; justify-content: space-between; color: #eee; }
.none svg { width: 15px; height: 7px; }
.s-tl { height: 40px; padding: 5px 0 0 14px; }
.s-tl .t:first-child { width: 174px; }
.s-tl .t:last-child { width: 240px; margin-left: 22px; }
.beat, .tap { width: 436px; height: 40px; margin-left: 14px; overflow: hidden; }
.tap { margin-top: 4px; }
.bt-on, .bt-off { align-items: center; }
.bt-on { width: 272px; padding-left: 8px; }
.bt-on span { width: 214px; padding-bottom: 3px; }
.bt-off { width: 164px; padding-left: 20px; }
.bt-off span { width: 107px; padding-bottom: 3px; }
.beat .bt-off { background: #575757; color: #797979; }
.beat .dot { width: 28px; height: 28px; }
.tap .xi { margin-left: 4px; }
.panel.server hr.hr3 { margin-top: 13px; }
.cb { margin: 9px 0 8px; padding-right: 18px; }
.s-cb { padding-left: 14px; gap: 8px; }
.s-cb .btn { width: 106px; height: 29px; }

.infl { flex: none; margin-left: 4px; }
.audio { width: 496px; height: 652px; }
.audio .badge, .midi .badge { left: 4px; }
.a-head { height: 62px; }
.a-head .titlebar { width: 404px; margin-left: 10px; }
.a-head .outline { padding-left: 22px; }
.a-head .q { margin: 4px 0 0 4px; }
.enabled { align-items: center; width: 139px; height: 42px; padding: 0 0 0 12px; }
.enabled .xi { margin: 0 10px 2px 0; }
.a-en { height: 54px; padding-left: 26px; }
.a-en .btn { width: 97px; height: 29px; margin: 6px 0 0 191px; }
.a-in { height: 40px; padding-left: 24px; }
.a-in .sq { width: 106px; height: 33px; padding-top: 2px; }
.sel { justify-content: flex-start; }
.sel span { text-align: center; padding-bottom: 2px; }
.sel .dn { width: 16px; height: 8px; margin-bottom: 2px; }
.a-in .sel { width: 218px; height: 33px; margin-left: 14px; }
.a-in .sel span { width: 187px; padding-left: 4px; padding-bottom: 1px; }
.rg { width: 20px; height: 20px; margin-left: 6px; }
.level { margin-left: 22px; }
.il { margin: 2px 8px 21px 0; }
.viz { gap: 16px; }
.a-viz { height: 92px; padding-left: 24px; }
.a-vl { height: 42px; padding: 3px 0 0 22px; gap: 16px; }
.vl .t:nth-child(1) { width: 110px; }
.vl .t:nth-child(2) { width: 142px; padding-left: 1px; }
.vl .t:nth-child(3) { width: 154px; }
.a-out { height: 70px; padding-left: 20px; }
.a-out .btn { width: 114px; height: 36px; margin-right: 6px; padding-bottom: 2px; }
.a-out .col { gap: 4px; }
.a-out .chn { align-items: center; width: 300px; height: 28px; padding-left: 8px; }
.a-out .chn span { width: 108px; }
.a-out .chn .tri { width: 8px; height: 15px; }
.a-out .chn b { width: 36px; margin-left: 4px; }
.a-out .chn b + svg { margin-bottom: 3px; }
.a-pan { height: 118px; padding-left: 20px; }
.kbox { flex-direction: column; align-items: center; width: 86px; height: 101px; }
.kbox svg { margin: -2px 0 -4px; }
.k1 { margin-top: 4px; padding-top: 1px; }
.k2 { height: 104px; margin-left: 22px; padding-top: 5px; }
.gain { flex-direction: column; width: 206px; height: 96px; margin: 4px 0 0 40px; padding: 1px 8px 0; }
.gain svg { margin: 3px 0 1px; }
.gain span:last-child { padding-left: 2px; }
.a-mo { padding-left: 14px; }
.a-mo .sq { width: 98px; height: 36px; }
.a-mo .sel { width: 234px; height: 34px; margin-left: 8px; }
.a-mo .sel span, .m-out .sel span { width: 184px; padding-left: 2px; }
.sel.dim { background: #595959; color: #7c6e58; }
.chs { align-items: center; width: 90px; height: 35px; margin: 2px 0 0 10px; padding: 0 0 0 8px; }
.chs .tri { width: 8px; height: 18px; margin: 0 4px 0 7px; }
.chs.dim { background: #575757; color: #808080; }
.chs.dim .tri { color: #7c6e58; }

.midi { width: 496px; height: 444px; }
.midi .badge { top: 6px; }
.m-head { height: 66px; padding-top: 6px; }
.m-head .titlebar { width: 388px; margin-left: 16px; padding-right: 6px; }
.m-head .outline { padding-left: 2px; }
.m-head .q { margin: 6px 0 0 8px; }
.m-en { height: 54px; padding-left: 18px; }
.m-en .enabled { padding-left: 14px; }
.m-en .btn { width: 97px; height: 29px; margin: 4px 0 0 195px; }
.m-in { height: 50px; padding-left: 16px; }
.m-in .sq { width: 86px; height: 36px; padding-bottom: 1px; }
.m-in .sel { width: 240px; height: 35px; margin-left: 14px; }
.m-in .sel span { width: 185px; padding-left: 2px; }
.m-in .sel span, .m-out .sel span { padding-bottom: 4px; }
.m-play { height: 77px; padding-left: 10px; }
.play { display: flex; align-items: center; justify-content: space-between; width: 352px; height: 62px; padding: 0 10px 0 4px; border: 2px solid #858585; border-radius: 8px; background: #333; }
.pbtn { display: flex; align-items: center; width: 45px; height: 40px; padding-left: 11px; border-radius: 6px; background: linear-gradient(#474747, #333); }
.read { width: 75px; height: 33px; margin: 14px 0 0 18px; }
.m-viz { height: 83px; padding-left: 12px; }
.m-vl { height: 46px; padding: 3px 0 0 10px; gap: 16px; }
.m-out { padding-left: 10px; }
.m-out .sq { width: 98px; height: 36px; padding-bottom: 1px; }
.m-out .sel { width: 234px; height: 35px; margin-left: 8px; }

/* descriptions */
.cards { margin-left: 122px; }
.card { position: relative; width: 632px; margin-bottom: 16px; padding: 0 12px 0 22px; border-radius: 7px; background: #5e5e5e; color: #eee; }
.card header { display: flex; align-items: flex-start; height: 78px; border-bottom: 2px solid #eee; padding: 20px 0 0 6px; }
.card .num { width: 40px; height: 40px; border-radius: 50%; background: linear-gradient(#ffbb92, #ffac7c); color: #5e5e5e; font-size: 24px; font-weight: bold; line-height: 39px; text-align: center; }
.card h2 { flex: 1; padding-left: 24px; font-size: 36px; line-height: 41px; margin-top: -5px; }
.card .btn { width: 90px; }
.card p { padding-left: 8px; font-size: 24px; line-height: 26.8px; white-space: nowrap; }
.k-player { height: 210px; }
.k-player .btn { margin-top: -10px; }
.k-player p { padding-top: 15px; }
.k-server { height: 360px; }
.k-server h2 { margin-top: -3px; }
.k-server .btn { margin-right: 26px; }
.k-server p { padding-top: 11px; }
.k-audio { height: 290px; }
.k-audio header, .k-midi header { padding-top: 18px; }
.k-audio h2, .k-midi h2 { margin-top: -3px; }
.k-audio .btn { margin-right: 26px; }
.k-audio p, .k-midi p { padding-top: 17px; }
.k-midi { height: 267px; }
.k-midi .btn { margin-right: 8px; }
.side { left: 637px; top: -20px; width: 240px; height: 99px; padding: 7px 0 0 9px; }
.k-server .side { top: -11px; }
.side.wide { width: 286px; }
.k-audio .side { top: -13px; }
.k-midi .side { left: 649px; top: -13px; }
.tail { position: absolute; left: -31px; top: 32px; width: 32px; height: 32px; }
.next { width: 294px; margin: 27px 0 0 170px; }
```
